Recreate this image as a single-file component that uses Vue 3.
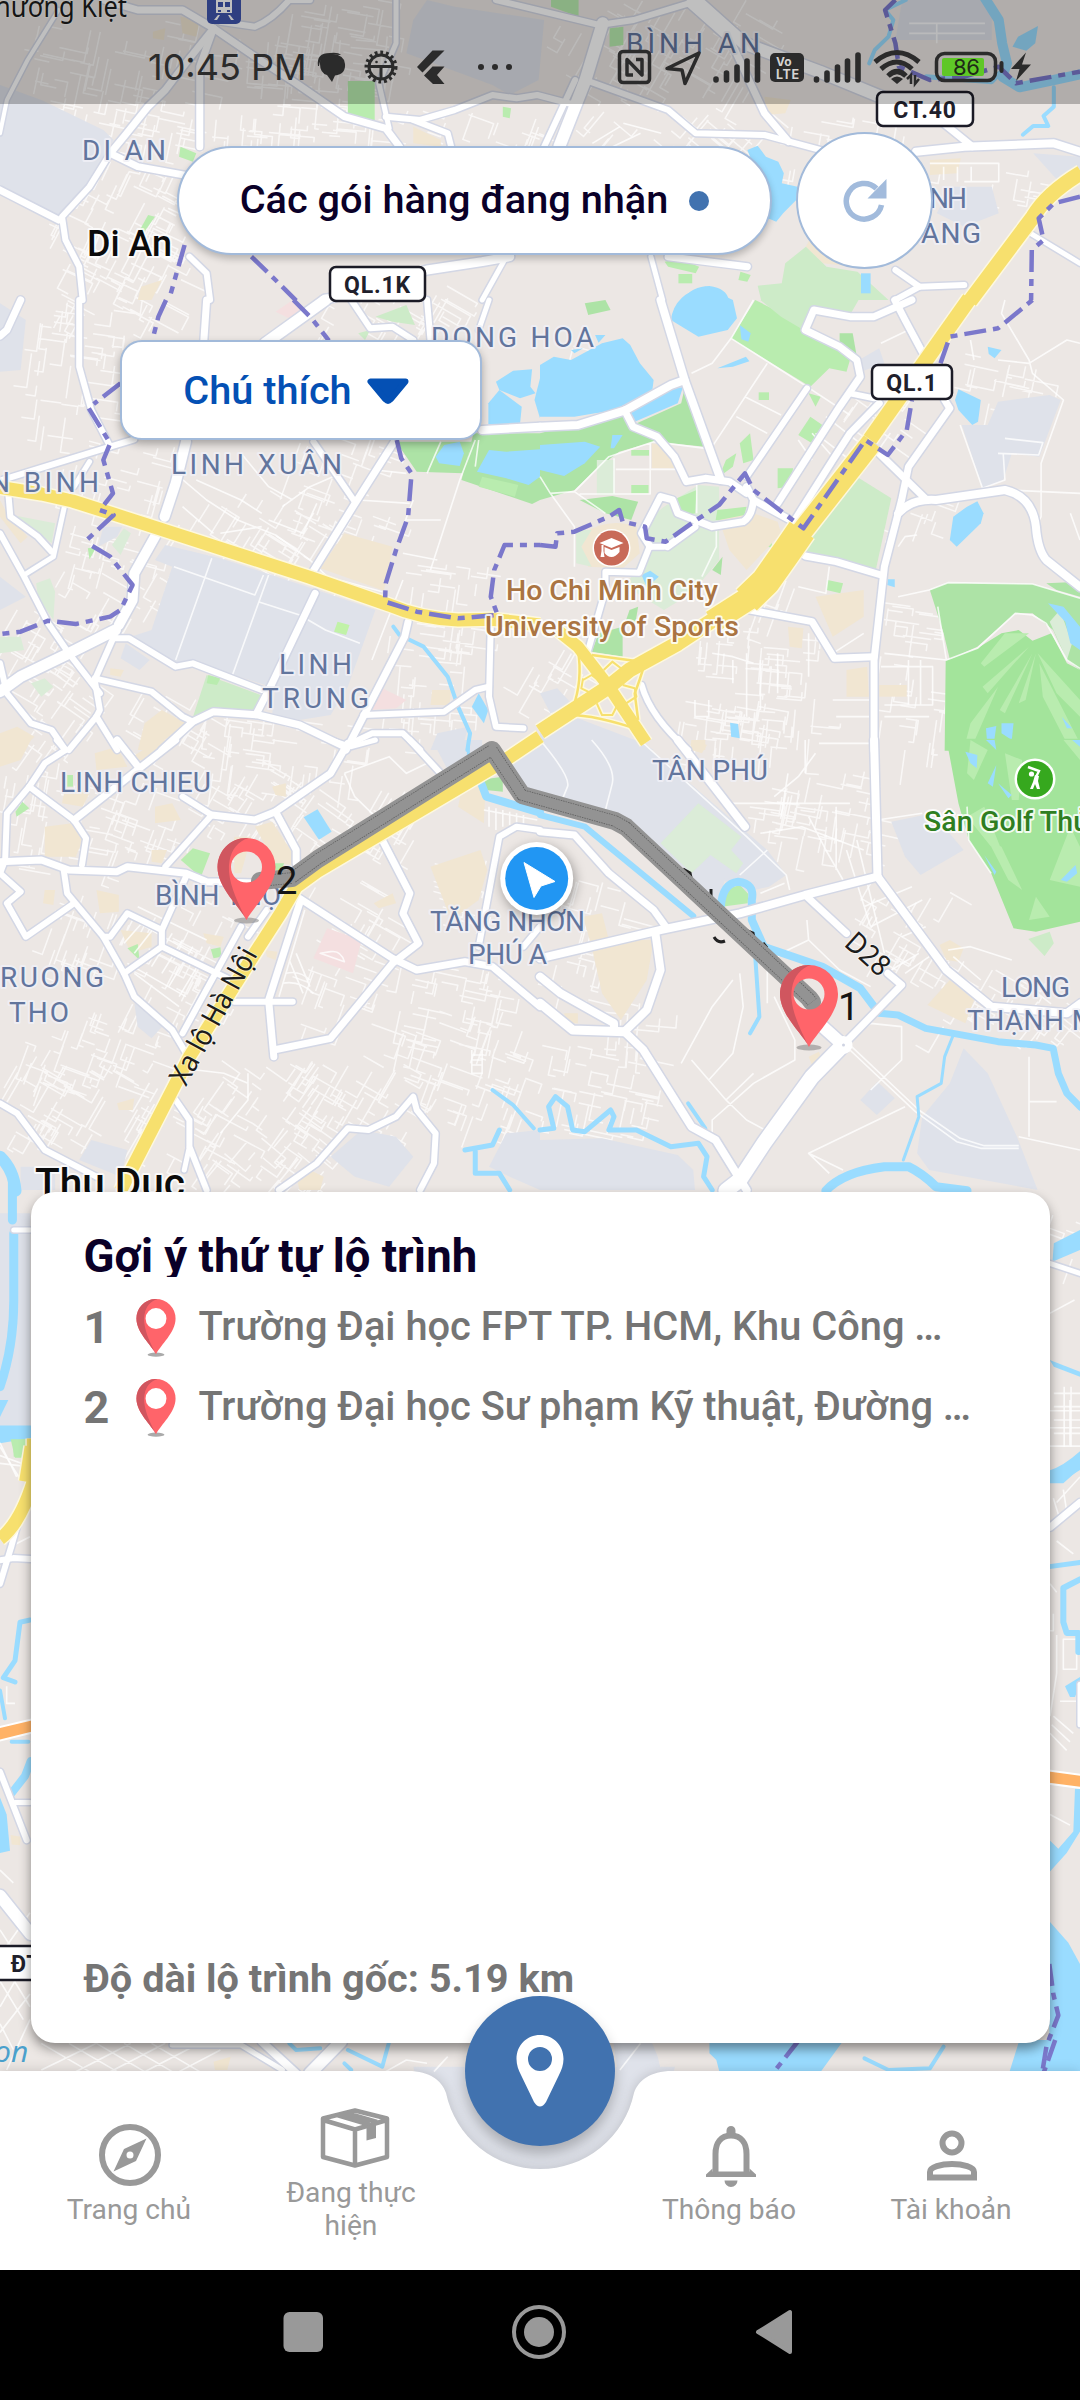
<script setup>
const WATER = '#9adcff'
const INDUS = '#dfe2ea'
const SAND = '#f1e6d2'
const PARK = '#ade3a6'
const LAWN = '#b9ecaf'
const PALE = '#cdebc8'
const MIST = '#dbecd8'
const GOLF = '#a3e49b'
const ROSE = '#f4dfe0'

// Map sheets: each one keeps its own local units and is placed by a transform.
const sheets = [
  {
    at: 'translate(0 0) scale(.68878 .33333)',
    areas: [
      [INDUS, 'M620 0L660 20 790 60 782 240 740 285 715 255 590 160 600 60Z'],
      [INDUS, 'M0 255L60 300 150 390 165 420 130 540 85 660 0 570Z'],
      [INDUS, 'M1310 0H1440V120H1300Z'],
      [INDUS, 'M1380 560H1440L1450 640 1400 680 1360 640Z'],
      [INDUS, 'M1500 460L1568 470V520L1535 540Z'],
      [LAWN, 'M505 243H544V360H505Z'],
      [LAWN, 'M885 85L905 80 905 135 885 140Z'],
      [LAWN, 'M800 0H840V50L800 20Z'],
      [LAWN, 'M262 440L285 460 280 485 260 470Z'],
      [LAWN, 'M215 645L225 650 208 700 203 690Z'],
      [LAWN, 'M730 320L742 325 740 355 730 350Z'],
      [SAND, 'M262 50L290 60 285 110 265 100Z'],
      [SAND, 'M600 380L640 420 640 440 600 430Z'],
      [SAND, 'M1110 290L1148 300 1140 340 1112 345Z'],
      [SAND, 'M222 95L240 85 238 120 222 115Z'],
      [SAND, 'M205 860L235 840 220 900H200Z'],
      [SAND, 'M1180 700L1240 800 1195 790 1170 740Z'],
      [SAND, 'M1350 480L1395 475 1390 520 1350 525Z'],
      [PALE, 'M1100 857L1135 850 1140 790 1170 740 1200 800 1245 815 1290 900H1105Z'],
      [LAWN, 'M965 785L985 775 1015 800 1010 820 970 800Z'],
      [LAWN, 'M985 822H1005V850H985Z'],
      [LAWN, 'M1075 815L1090 825 1085 845 1072 840Z'],
      [WATER, 'M1085 450L1100 437 1112 470 1130 485 1138 520 1135 550 1158 560 1156 600 1137 640 1127 665 1115 655 1110 600 1100 560 1095 500Z'],
      [WATER, 'M990 900Q1005 858 1030 858 1055 865 1058 900Z'],
      [WATER, 'M1250 820H1264V880H1250Z'],
      [WATER, 'M1478 110L1507 78 1503 130 1490 152 1470 140Z'],
    ],
    streams: [
      [10, 'M1430 -5L1450 60 1455 130 1462 190 1455 230 1480 262 1530 240 1570 222'],
      [4, 'M1315 0L1285 30 1297 60 1290 110 1270 150 1262 190'],
      [4, 'M1530 262L1530 320 1515 348 1522 378 1500 378 1485 404'],
      [5, 'M1345 230L1440 245 1460 200'],
    ],
    roads: [
      [7, 'M150 0L200 30 265 30 310 85 275 175 240 270 215 320 180 410 160 460 200 500 280 530'],
      [6, 'M450 0L420 0Q395 60 370 80L320 65'],
      [7, 'M310 85L290 200 290 440'],
      [7, 'M310 85L370 170 430 250 500 350 560 385 580 440'],
      [4, 'M85 30L40 180 10 300 0 400'],
      [6, 'M160 460L130 560 90 650 95 720 115 800 120 900'],
      [7, 'M0 570L85 660'],
      [5, 'M575 0V130L550 250 565 385'],
      [6, 'M720 0L870 75 920 60 1000 10'],
      [12, 'M875 70L850 240 812 440'],
      [6, 'M835 240L790 440'],
      [6, 'M560 350L610 360 660 330 715 285 750 295 780 285 830 312'],
      [6, 'M600 360L650 400 655 440'],
      [7, 'M1000 10L1060 120 1110 340 1145 425'],
      [6, 'M850 240L970 330 1010 400 1110 405 1200 455'],
      [12, 'M1010 0L1080 130 1190 215 1290 300'],
      [8, 'M1330 455L1400 440 1530 430 1568 455'],
      [7, 'M1370 370L1412 440'],
      [9, 'M470 900L620 810 700 785 740 770'],
      [5, 'M735 770L700 900'],
      [5, 'M945 770L962 900'],
      [7, 'M970 770L1085 800'],
      [6, 'M275 770L300 820 305 900'],
      [6, 'M1300 810L1335 860 1400 855'],
      [6, 'M1335 860L1300 900'],
      [5, 'M1480 680L1568 790'],
    ],
    lines: 'M1350 490H1450V545H1400M1370 500V540M1390 500V545M1410 500V545M900 380L860 430M905 370L960 400M870 460L930 400M1000 440L940 560M1320 70H1430M1360 70V130M1320 100H1430',
    yellow: [[15, 'M1570 518Q1520 580 1500 650L1408 904']],
    borders: [
      'M1300 0L1285 30 1300 130 1305 200 1350 240 1400 230 1450 200 1475 250 1568 215',
      'M1568 590L1530 610 1508 655 1515 720 1498 750 1497 900',
      'M365 770L400 840 430 902',
      'M268 735L248 880',
    ],
  },
  {
    at: 'translate(0 300) scale(.34439 .33333)',
    areas: [
      [INDUS, 'M480 735L640 775 920 870 1090 930 1010 1160 960 1245 870 1260 790 1245 800 1165 680 1125 540 1090 500 1095 380 1010 440 990 500 800 450 780Z'],
      [INDUS, 'M0 830L75 890 0 930Z'],
      [INDUS, 'M0 10L75 60 60 210 0 215Z'],
      [INDUS, 'M365 1030L435 1080 405 1110 350 1075Z'],
      [INDUS, 'M300 680L355 680 340 710 285 740Z'],
      [INDUS, 'M1270 1300L1360 1280 1340 1350H1250Z'],
      [PALE, 'M600 1125L770 1190 740 1240 620 1240 560 1252Z'],
      [LAWN, 'M605 1125L640 1135 630 1155 600 1150Z'],
      [PARK, 'M1150 425H1370L1345 520 1210 515Z'],
      [PARK, 'M1375 400H1568V600L1545 612 1340 540Z'],
      [LAWN, 'M1400 530L1505 555 1495 590 1390 560Z'],
      ['#c1f2a8', 'M980 965L1015 975 1005 1005 970 995Z'],
      [MIST, 'M105 850L145 835 160 875 155 960 110 890Z'],
      [MIST, 'M50 648L160 670 150 730Z'],
      [MIST, 'M325 735L360 685 380 700 350 765Z'],
      [LAWN, 'M255 745L280 740 260 778Z'],
      [PALE, 'M1090 50L1180 15 1205 75 1140 65Z'],
      [PALE, 'M1040 100L1075 90 1060 120Z'],
      [MIST, 'M0 1010H60L70 1050 0 1060Z'],
      [MIST, 'M90 1150L130 1135 155 1160 120 1190Z'],
      [SAND, 'M1000 700L1140 740 1115 872 930 805Z'],
      [SAND, 'M420 1270L470 1230 540 1270 440 1350H400Z'],
      [SAND, 'M0 1300L50 1280 100 1310 60 1350H0Z'],
      [SAND, 'M0 600L20 640 80 710 60 730 0 650Z'],
      [SAND, 'M320 1105L360 1110 350 1130 320 1125Z'],
      [SAND, 'M1255 1170L1310 1170 1305 1215 1250 1215Z'],
      [ROSE, 'M1110 1165L1180 1200 1150 1225 1070 1230Z'],
      [ROSE, 'M800 35L850 0 885 30 850 60Z'],
      [WATER, 'M1440 245L1490 212 1545 208 1540 260 1555 280 1510 295 1450 270Z'],
      [WATER, 'M1418 310L1450 270 1515 320 1510 372 1418 372Z'],
      [WATER, 'M1568 235L1552 300 1568 355Z'],
      [WATER, 'M1265 470L1290 435 1335 425 1347 460 1335 498 1275 490Z'],
      [WATER, 'M1420 450L1470 455 1568 448V530L1535 555 1470 535 1385 515Z'],
      [WATER, 'M1390 1180L1418 1230 1405 1270 1370 1220Z'],
    ],
    streams: [[4, 'M1142 980L1160 1005 1230 1040 1300 1130 1330 1220 1365 1300 1357 1350']],
    roads: [
      [7, 'M60 0L20 90 0 108'],
      [6, 'M230 0V200L265 330 320 440'],
      [6, 'M0 542L320 440 390 418'],
      [5, 'M260 485L215 560M187 620L155 770 70 825'],
      [6, 'M25 590L30 650 110 710 150 755'],
      [10, 'M540 425L510 550 478 650M450 710L390 820 385 900 345 975'],
      [6, 'M335 1000L275 1140 290 1230 280 1250 200 1350'],
      [7, 'M600 0L592 120'],
      [11, 'M945 0L770 130'],
      [6, 'M1020 0L1075 85 1140 80 1200 120'],
      [6, 'M1240 0L1250 120'],
      [5, 'M1420 0L1390 90'],
      [8, 'M1400 390L1568 380'],
      [7, 'M1145 425L1025 620 905 820M915 880L790 1150 745 1240'],
      [6, 'M910 425L1030 605'],
      [6, 'M0 700L70 830 140 970 200 1060 290 1180'],
      [11, 'M0 1175L60 1130 200 1060 335 990'],
      [6, 'M330 1015H375L510 1100 560 1090 760 1170'],
      [6, 'M275 1135L440 1175 530 1250 560 1265'],
      [6, 'M0 1090L20 1180 90 1270 150 1290 190 1350'],
      [6, 'M280 1250L340 1350'],
      [7, 'M470 1350L560 1265 620 1235 750 1245 870 1275 1000 1340'],
      [7, 'M1185 965L1175 1010 1070 1220 1005 1350'],
      [6, 'M1055 1245L1290 1235 1380 1170 1420 1160'],
      [6, 'M1425 975L1420 1190 1440 1280 1520 1285'],
      [6, 'M1000 1340L1080 1300 1170 1300 1220 1350'],
    ],
    lines: 'M615 775L510 1080M505 800L740 885 765 825M780 825L675 1125M750 905L870 945 945 990 1045 1030M520 530L600 600 690 660 800 705 900 780 950 830 1110 875M1280 425L1240 520M1380 420L1335 540 1250 810M1170 840L1080 1080M1200 600L1170 680M570 540L700 600 760 640M700 460L780 560 850 600M820 620L900 560 990 520M1090 510L1180 520M1040 600L1190 610M530 620L620 700M640 700L760 680M780 660L880 700 920 610M1180 660L1280 660M1170 760L1270 780M1390 420L1380 500',
    yellow: [[13, 'M0 562L120 582 210 603 360 652 900 832 1130 915Q1220 955 1330 960L1430 958 1568 975']],
    borders: [
      'M482 0L460 50 445 110', 'M852 0L905 55 955 122', 'M350 250L272 312',
      'M258 325L320 430 300 480 328 580 290 630 330 645 250 722',
      'M268 738L320 770 385 855 350 930 320 950 220 972 140 962 60 995 0 1002',
      'M1152 420L1165 475 1195 520 1185 650 1150 750 1120 850 1118 905 1210 935 1330 955 1445 945 1425 890 1435 810 1465 735 1568 735',
    ],
  },
  {
    at: 'translate(540 300) scale(.34439 .33333)',
    areas: [
      [PARK, 'M0 400L240 335 270 375 410 310 420 265 480 440 330 425 230 455 160 510 100 570 0 600Z'],
      [LAWN, 'M625 0L780 80 900 180 890 215 840 205 785 260 555 115Z'],
      [PALE, 'M640 0H925L900 45 790 30 765 90 700 50Z'],
      [PARK, 'M870 100H908L920 170 870 135Z'],
      [PALE, 'M920 530L1020 595 975 810 760 750Z'],
      [MIST, 'M360 620L460 555 520 560 520 780 440 880 360 930 250 860 310 740 290 680Z'],
      [LAWN, 'M385 600L455 570 450 640 410 650Z'],
      [PARK, 'M115 600L210 588 285 605 265 660 190 640Z'],
      [LAWN, 'M515 630L600 620 590 660 510 660Z'],
      [MIST, 'M165 480H217V585H165Z'],
      [SAND, 'M125 700Q200 650 280 680L290 760 240 805 140 800 120 740Z'],
      [MIST, 'M105 690L150 690 120 740 150 800 105 790Z'],
      [PARK, 'M130 10L190 0 205 30 140 45Z'],
      [LAWN, 'M265 555H315V580H265Z'],
      [LAWN, 'M265 450H317V467H265Z'],
      [LAWN, 'M580 430L610 400 620 480 590 490Z'],
      [LAWN, 'M750 405L785 350 820 375 790 430Z'],
      [LAWN, 'M635 277H665V300H635Z'],
      [LAWN, 'M780 280L815 290 800 320Z'],
      [LAWN, 'M690 505H735L725 560 690 565Z'],
      [LAWN, 'M600 705L670 700 675 745 650 735Z'],
      [LAWN, 'M540 480L570 460 560 500 520 530Z'],
      [LAWN, 'M835 840L880 850 872 880 832 870Z'],
      [PARK, 'M500 810L530 770 525 825Z'],
      [PARK, 'M170 1000L240 980 240 1070 150 1055Z'],
      [PARK, 'M260 930L285 920 275 980 250 960Z'],
      [SAND, 'M520 660L620 640 690 665 700 700 600 810 550 750Z'],
      [SAND, 'M800 890L940 870 940 950 850 1010Z'],
      [SAND, 'M890 1110L950 1100 955 1190H890Z'],
      [SAND, 'M985 1155H1065V1190H985Z'],
      [SAND, 'M325 430L385 445 400 505H325Z'],
      [SAND, 'M720 980L765 985 760 1045 725 1040Z'],
      [SAND, 'M440 1320L480 1320 480 1350H435Z'],
      [PARK, 'M1132 870L1185 848 1430 852 1568 895V1110L1530 1080 1490 990 1430 940H1380L1270 1040 1190 1078 1172 1000Z'],
      [PARK, 'M1470 850L1568 845V890L1500 870Z'],
      [GOLF, 'M1178 1082L1270 1045 1340 1000 1390 990 1430 1022 1485 1000 1530 1090 1568 1110V1352H1175Z'],
      ['#ece7e4', 'M1340 990L1385 945 1430 950 1490 995 1440 1015 1390 985Z'],
      [MIST, 'M1480 965L1510 930 1545 1030 1530 1080Z'],
      [LAWN, 'M1350 1000L1420 1000 1290 1100 1280 1090ZM1420 1040L1300 1180 1285 1160ZM1430 1060L1350 1240 1335 1230ZM1440 1060L1410 1200 1390 1210ZM1445 1060L1568 1200V1250L1500 1180ZM1450 1090L1568 1330V1350H1540L1460 1190ZM1330 1160L1250 1350H1230L1250 1270Z'],
      [INDUS, 'M1225 375H1300L1330 305 1480 285 1512 300 1450 470 1370 460 1345 540 1285 565Z'],
      [INDUS, 'M910 190L985 145 1000 190 920 220Z'],
      [INDUS, 'M0 1295L110 1255 300 1330 330 1350H0Z'],
      [INDUS, 'M0 1180L50 1165 100 1220 30 1240Z'],
      [WATER, 'M0 195L40 170 90 180 180 130 240 115 262 135 290 190 330 240 320 320 270 325 160 340 100 350 0 350Z'],
      [WATER, 'M380 60Q390 -20 480 -40L560 0 572 55 545 90 460 110Z'],
      [WATER, 'M265 370L260 330 380 265 415 262 400 310Z'],
      [WATER, 'M0 435L130 425 175 440 130 490 70 528 0 510Z'],
      [WATER, 'M205 445L210 405 240 405 215 445Z'],
      [WATER, 'M580 75L612 100 605 125 585 118Z'],
      [WATER, 'M515 205L598 170 608 184 560 200Z'],
      [WATER, 'M160 105L190 105 170 128ZM90 150L125 145 100 160Z'],
      [WATER, 'M1205 300L1215 268 1280 300 1272 365 1255 375 1215 330Z'],
      [WATER, 'M1200 650L1240 620 1270 604 1288 640 1280 670 1210 740 1190 720Z'],
      [WATER, 'M1300 140L1340 150 1320 175 1303 162Z'],
      [WATER, 'M295 825L320 812 345 830 310 862Z'],
      [WATER, 'M552 1268L575 1272 580 1315 555 1310Z'],
      [WATER, 'M1010 838H1030V862L1008 855Z'],
      [WATER, 'M1475 910L1520 920 1568 980V1050L1540 1030 1525 965Z'],
      [WATER, 'M1295 1285L1325 1278 1315 1350H1300ZM1340 1270H1375L1370 1320 1340 1300ZM1515 1250L1545 1285 1530 1285ZM1545 1320L1568 1320V1345Z'],
    ],
    streams: [],
    roads: [
      [8, 'M350 0L420 240 525 540'],
      [8, 'M0 380L110 375 245 332 380 255 420 240'],
      [7, 'M245 330L270 380 340 410 390 470 425 545 480 535 550 545 600 580'],
      [6, 'M600 530L775 265'],
      [7, 'M690 610L870 320 930 230 920 180 870 140 770 90 795 30 900 50 970 50 1080 0'],
      [7, 'M740 660L850 480 900 400 985 310'],
      [7, 'M1030 0L1060 60 1112 160'],
      [7, 'M1175 300L1190 325 1070 500 1050 600 1000 800 970 1080V1352'],
      [6, 'M900 280L970 295'],
      [7, 'M950 425L1118 595'],
      [8, 'M1040 640Q1080 595 1150 600L1350 570Q1430 590 1440 680 1445 750 1470 780L1570 862'],
      [7, 'M770 768L860 785 990 825'],
      [7, 'M610 930L790 965 855 1075 970 1070'],
      [7, 'M600 560L620 600 735 665'],
      [7, 'M620 600Q615 650 590 665L500 680 400 640 385 600 350 590 295 700 320 740M370 740L450 680'],
      [6, 'M320 740H360M318 740L288 818 190 815V870L140 1050'],
      [6, 'M295 1155Q320 1250 430 1350'],
    ],
    lines: 'M620 0L555 115 500 190 440 220M555 115L775 260 900 345M660 190L500 440M595 290L700 345M570 350L660 400M100 575L200 470 330 425 480 445M30 580L100 680V800M100 575L190 640M115 582H320V430M215 475V582M220 508H400M455 555V640M512 690V740L470 830M0 530L30 580 100 575M990 130L1070 90M1350 0L1340 40 1420 180 1430 220 1520 300 1455 490V650L1430 700M1330 180L1420 190 1530 120 1568 130M1250 120L1260 180M1350 415L1460 428 1448 465 1330 460M1220 375L1285 565 1350 540 1345 460M1360 570L1568 580M1540 640L1568 720M750 860L830 880 840 800M1040 740L1060 710 1095 705M1000 1060L1180 1080 1270 1045 1380 940 1430 945 1470 970 1530 1080 1568 1105M1155 920L1180 1080M1040 890L1130 870 1185 848 1430 852 1568 895M850 1060L940 1000M500 1060L560 1070 620 1090M600 1060V1250M640 1080V1230M690 1060V1180M560 1080V1150M780 1000V1130M850 1200H970M860 1250H960M810 1330H960M1000 1250H1130M990 1100H1140V1215H1000M1070 1080V1215M1105 1080V1215M450 1200V1250H490V1200M790 480L750 420M800 400L900 480M830 350L930 430M850 470L790 400',
    yellow: [
      [15, 'M1247 -4L958 418'],
      [21, 'M965 425L745 715'],
      [29, 'M760 690L720 750 655 845 600 900'],
      [23, 'M630 880L500 965'],
      [15, 'M510 955L400 1030 260 1110 200 1160 0 1295'],
      [12, 'M50 990L110 1040 200 1160 308 1328'],
      [2.5, 'M150 1065L305 1087Q290 1140 275 1180L285 1260M110 1050Q125 1140 95 1225M85 1245Q160 1245 290 1290'],
      [2, 'M185 1110L210 1085 235 1105 220 1135M125 1140L150 1125 175 1145M150 1180L120 1165 125 1135M165 1210L180 1245 210 1245 225 1215M240 1155L275 1165 280 1190 250 1210 230 1190'],
    ],
    borders: [
      'M0 735L45 740 50 700 100 695 200 650 230 630 240 665 305 680 310 715 365 725 440 670 520 615 595 520 620 570 765 685 945 420 1010 465 1065 390 1080 300',
      'M1163 190L1190 110 1330 85 1430 0',
    ],
  },
  {
    at: 'translate(0 740) scale(.34439 .33333)',
    areas: [
      [SAND, 'M0 0H90L60 60 0 80Z'], [SAND, 'M370 60L460 0H520L430 60Z'],
      [SAND, 'M450 200L500 190 525 240 450 250Z'], [SAND, 'M130 260L210 250 240 300 220 350 130 350Z'],
      [SAND, 'M275 40L340 20 370 80 280 90Z'], [SAND, 'M190 140L260 160 240 200 180 190Z'],
      [SAND, 'M740 260L790 245 850 340V375L800 370Z'], [SAND, 'M1250 380L1395 330 1415 390 1390 480 1310 540Z'],
      [SAND, 'M1345 130L1410 140 1405 250 1330 200Z'], [SAND, 'M350 570L440 580V620L380 640Z'],
      [SAND, 'M280 450L345 465 345 515 290 520Z'], [SAND, 'M680 290L730 290 700 400 680 400Z'],
      [SAND, 'M1085 490L1140 460 1150 490 1100 505Z'], [SAND, 'M590 580L650 590 640 620 600 610Z'],
      [SAND, 'M790 140L830 130 830 170 800 165Z'], [SAND, 'M770 630L805 635 800 660 775 650Z'],
      [SAND, 'M130 450L160 450 155 495 125 490Z'], [SAND, 'M440 330L485 330 470 370 440 365Z'],
      [SAND, 'M860 1310L900 1290 940 1310 930 1350H870Z'], [SAND, 'M340 1090L390 1075 385 1110 345 1110Z'],
      [ROSE, 'M950 565L1050 600 1025 700 910 655Z'],
      [LAWN, 'M525 360L560 325 610 340 583 412Z'], [LAWN, 'M370 625L400 612 405 660Z'],
      [LAWN, 'M612 628L640 622 643 650 620 655Z'], [LAWN, 'M45 215L65 185 85 205 48 230Z'],
      [LAWN, 'M195 105H212V140H195Z'], [LAWN, 'M795 370H825L815 395 795 390Z'],
      [INDUS, 'M960 1250L1050 1170 1150 1190 1200 1250 1130 1340 1030 1310Z'],
      [INDUS, 'M1568 1170L1470 1180 1420 1280 1480 1310 1568 1350Z'],
      [INDUS, 'M1270 30L1290 0H1400V50L1300 90Z'], [INDUS, 'M1470 70L1568 20V185L1510 160Z'],
      [PARK, 'M1390 120L1460 110V155L1410 150Z'],
      [INDUS, 'M390 790L480 850 440 895 400 860Z'], [INDUS, 'M230 1260L265 1200 370 1230 350 1310Z'],
      [INDUS, 'M60 1280H160V1350H60Z'],
      [WATER, 'M882 232L922 208 963 275 926 299Z'],
    ],
    streams: [
      [8, 'M1393 118L1412 170 1568 218'], [4, 'M1430 1050L1490 1095 1550 1165'],
      [5, 'M1450 1170L1430 1215 1350 1230M1380 1230V1300H1450L1480 1350'],
      [12, 'M0 1250Q40 1290 45 1352'], [3, 'M1360 0V45'],
    ],
    roads: [
      [6, 'M165 0L190 30 130 70 85 140 20 220 15 360 0 400'], [7, 'M340 0L405 85 215 240'],
      [7, 'M510 0L405 85'], [6, 'M85 140L215 240 250 295 238 375'],
      [7, 'M0 365L120 360 200 390 340 395 370 380 540 400 600 425 770 430'],
      [6, 'M480 380L615 225 530 170'], [7, 'M615 225L740 240 800 215 960 100 1010 10'],
      [7, 'M800 215L860 330V370'], [6, 'M1190 0L1275 95'], [5, 'M960 0L1020 20 1090 0'],
      [6, 'M185 390L195 460 300 590 360 700 390 770 500 870 540 940'],
      [6, 'M0 400L60 455 20 490 75 590 215 490'], [6, 'M300 590H320L370 520 470 570 540 410'],
      [6, 'M470 570V620L360 700'], [6, 'M470 620L660 715'],
      [6, 'M775 510L720 590M700 560L530 880'], [7, 'M870 490L780 780 795 950'],
      [6, 'M680 785H850'], [7, 'M870 475L1140 655 1210 690 1350 665 1430 680 1568 800'],
      [7, 'M1100 280L1190 460 1170 520 1215 610 1140 670 960 895 795 930'],
      [6, 'M1390 620L1450 290 1500 260 1568 270'], [6, 'M510 1080L550 1140V1220L600 1350'],
      [5, 'M550 1220L535 1290'], [6, 'M0 1090L50 1120 130 1230 280 1310'],
      [6, 'M810 1350L920 1270 1010 1165 1070 1170 1150 1130 1200 1070 1210 1110 1265 1180 1260 1270 1220 1350'],
      [6, 'M1568 560L1520 620'],
    ],
    lines: 'M885 510L810 770M1000 100L1130 50 1180 100 1240 70M1000 100L1030 170 1090 230M720 1000V1080L640 1180M570 990L650 1000 720 1030M370 530L560 640M400 500L600 600M420 540L360 610M450 560L390 640M500 580L440 680M530 600L470 700M560 620L490 740M590 650L520 770M390 700L520 800M370 670L540 770M1370 930V1000H1400V930M1370 945H1400M1370 960H1400M1370 975H1400M840 660L880 760M860 640L900 740M830 700Q870 690 900 720M820 730Q870 720 910 760M930 640L1000 665Q990 630 960 635ZM1405 210L1560 240M1420 200V260M1440 205V270M1460 210V260M1480 215V255M1500 220V255M1520 225V260',
    yellow: [[13, 'M1568 -10L1460 65 920 395 860 440 815 520 740 640 550 950 350 1352']],
    borders: [],
  },
  {
    at: 'translate(540 740) scale(.34439 .33333)',
    areas: [
      [INDUS, 'M0 0H290L660 330 715 405 665 440 600 455 490 400 440 400 250 260 0 180Z'],
      [INDUS, 'M430 400L495 350 540 400 520 500 440 460Z'],
      [MIST, 'M460 190L585 290 555 330 590 370 570 400 495 345 440 400 350 310Z'],
      [INDUS, 'M1020 245L1140 220 1230 330 1105 405 1060 350Z'],
      [INDUS, 'M930 1080L980 1025 1030 1075 978 1125Z'],
      [INDUS, 'M1230 925L1300 1000 1385 1190 1445 1350 1130 1290 1095 1240 1110 1130 1190 1030Z'],
      [INDUS, 'M0 1200L180 1195 400 1245 445 1290 450 1350H0Z'],
      [GOLF, 'M1180 -4H1568V545L1440 575 1375 565 1310 400 1245 300 1215 190Z'],
      [LAWN, 'M1250 0L1300 30 1260 120 1240 100ZM1300 300L1340 320 1400 450 1360 420ZM1520 0H1568V60ZM1440 470L1480 530 1420 540ZM1540 260L1568 320V440L1480 420ZM1350 40L1400 60 1390 180 1370 180ZM1240 230L1290 200 1340 330 1310 320Z'],
      [PALE, 'M1418 597L1480 575 1492 610 1465 648Z'],
      [LAWN, 'M528 500L535 450 580 435 605 462 603 490Z'],
      [SAND, 'M125 530L180 520 200 600 330 600 310 720 235 840 180 760 150 620Z'],
      [SAND, 'M1160 615L1190 600 1230 625 1215 665 1180 660Z'],
      [SAND, 'M1125 795L1190 720 1260 780 1235 850Z'],
      [SAND, 'M780 950L810 935 820 965 790 975Z'],
      [SAND, 'M70 820H110V850H75Z'], [SAND, 'M440 0L485 15 470 40 440 30Z'],
      [WATER, 'M1295 0H1320L1325 30ZM1235 35L1270 45 1268 85 1250 70ZM1325 75L1315 140 1300 130ZM1330 130L1370 165 1360 175ZM1290 345L1325 395 1320 405ZM1512 420L1555 375 1560 400 1530 425ZM1545 0H1568V20Z'],
    ],
    streams: [
      [6, 'M0 225L130 260 200 320 445 528'],
      [8, 'M525 500Q530 430 575 425 625 430 615 480L615 540 650 620 820 680 930 745 970 800'],
      [7, 'M985 820L1040 825 1120 865 1200 880 1330 905 1440 915 1490 925 1505 1000 1530 1060 1570 1102'],
      [4, 'M625 650L637 830 610 880'], [3, 'M1200 885L1175 950 1165 1030 1095 1070 1100 1130 1055 1260'],
      [9, 'M830 1352Q880 1295 1000 1280L1070 1280Q1110 1300 1150 1340L1240 1352'],
      [5, 'M0 1170L40 1165 25 1100 45 1070 80 1100 95 1170 130 1175 205 1110 215 1130 200 1170 280 1170 380 1220 460 1210 485 1250 475 1310 500 1350'],
      [4, 'M430 1090L480 1165'],
    ],
    roads: [
      [8, 'M400 0L595 260'], [8, 'M970 0L980 410'],
      [8, 'M0 655L350 570 580 520 770 465 980 410'],
      [8, 'M980 410L1180 690 1310 800 1530 820 1570 790'],
      [7, 'M770 465L890 580'], [7, 'M1010 700L1050 735 880 915'],
      [12, 'M810 850L880 915'], [15, 'M880 915L790 1010 650 1210 580 1320 540 1352'],
      [7, 'M0 275L100 285 200 400 330 510 365 560'], [8, 'M335 580L350 690 310 810 245 875'],
      [8, 'M0 710L60 760 215 850V870'], [9, 'M0 790L95 870 245 875'],
      [8, 'M245 875L300 930 440 1160 510 1200 600 1350'],
    ],
    lines: 'M290 0L600 290 715 405 725 450M150 0Q220 80 210 130L190 210M0 0Q90 110 80 140L60 190M660 330L580 405M900 930L1090 1115 1210 1205 1280 1225H1390M905 920L1100 1110 1220 1195 1290 1217H1390M960 850L1050 860 1050 960 960 1050M1060 1100L780 1240 840 1300M690 1190L600 1140 540 1080 440 960M680 770L740 900V960L620 1030 500 1140V1180M540 1080L620 1000M490 1020L560 940 590 800 580 700M410 970L500 800 560 720M900 900L960 850M640 460L710 430M775 540L780 600 870 690 960 740M780 600L700 640 660 690V790M880 1290L780 1240M980 240L1110 220M1310 400L1245 300 1240 200M1185 630L1250 620 1370 660M1020 690L1100 640M1050 590L1120 560M1060 700L1130 650M1200 650L1280 720M1390 1190L1568 1230M1420 950V1190M1420 1085H1500M770 0V100M560 190H900M680 170L750 110 800 40M860 200V390M920 300L1000 640M890 330L960 560M940 500L1080 440M960 560L1110 480M640 280L760 260 940 330M720 100L700 230M780 230L830 330 880 420',
    yellow: [],
    borders: [],
  },
  {
    at: 'translate(0 1180) scale(.68878 .33333)',
    areas: [
      [INDUS, 'M0 100H44V740H0Z'], [LAWN, 'M18 770L44 780V800L30 830H20Z'],
      [WATER, 'M0 738H44V775L0 790Z'], [WATER, 'M1530 190L1568 150V210L1528 245Z'],
      [WATER, 'M1524 540L1568 575V590L1530 560Z'], [WATER, 'M1524 890L1568 830V870L1545 900H1524Z'],
    ],
    streams: [[9, 'M18 0V120M20 160V360Q20 500 0 620']],
    roads: [[5, 'M20 150H44'], [5, 'M1524 250L1568 280']],
    lines: 'M1530 640H1568M1530 680H1568M1530 720H1568M1530 760H1568M1545 620V800M1555 620V800M0 800L30 900M0 850L40 860M1524 400L1560 360',
    yellow: [[14, 'M46 800L38 905']],
    borders: [],
  },
  {
    at: 'translate(0 1400) scale(.33333 .4273)',
    areas: [
      [INDUS, 'M0 0H90V55H0Z'], [WATER, 'M0 0H25L0 40Z'], [LAWN, 'M32 92H80L65 135H45Z'],
      [WATER, 'M0 930L20 970 30 1055 0 1060Z'], [SAND, 'M32 1018L62 1022 60 1042 35 1040Z'],
    ],
    streams: [[13, 'M0 75H92'], [5, 'M90 515L60 520 45 610 10 650 45 660'], [4, 'M0 680L15 745M35 800H85'], [8, 'M35 920L75 880 92 845']],
    roads: [[6, 'M92 180L35 340 0 430'], [6, 'M0 375L40 370 92 372'], [6, 'M0 870L80 1030'], [5, 'M45 942H90'], [12, 'M0 1160L92 1250']],
    lines: 'M0 100L50 180M0 130L70 150M40 340L90 320M20 670V710H45M0 1100L40 1130M0 1300L90 1200M0 1420L90 1300M0 1480L90 1390M20 1568L90 1450M0 1360L70 1450M20 1330L90 1420M0 1240L50 1300M0 1460L40 1520',
    yellow: [[13, 'M100 90V190Q60 290 0 325']],
    borders: [],
  },
  {
    at: 'translate(1020 1400) scale(.33333 .4273)',
    areas: [
      [WATER, 'M88 165Q130 155 180 120V160L130 195H88Z'],
      [WATER, 'M88 1030L115 1050 160 1010 165 910H180V1010L140 1060 88 1105Z'],
      [WATER, 'M88 1220L145 1270 180 1320V1568H88Z'],
      [WATER, 'M135 670L180 648V665L165 695H150Z'],
    ],
    streams: [[5, 'M88 390L180 380'], [6, 'M180 420L130 440 130 520 140 545 175 545V590']],
    roads: [[7, 'M90 298L180 240'], [5, 'M180 665V760']],
    lines: 'M90 65H180M90 25H180M90 108H180M150 0V108M110 240L180 180M120 280L100 230M140 260L130 210M110 330L160 360M90 430L110 450M110 550V640L90 740M120 705H180M90 780L140 820M130 560V630H170V560ZM90 970L150 995M100 500V540H90M95 760L150 800M100 740L160 780',
    yellow: [],
    borders: ['M88 1320L100 1390 115 1440 80 1510 68 1568'],
  },
  {
    at: 'translate(0 1880) scale(.68878 .33333)',
    areas: [
      [INDUS, 'M890 480H945L955 530 965 620H900ZM600 560H980L920 1000H650Z'],
      [WATER, 'M1030 480H1225L1190 580H1045L1040 540 1030 520Z'],
      [WATER, 'M1480 480H1568V580H1465Z'],
      [SAND, 'M310 545L335 530 330 570H312Z'],
    ],
    streams: [[4, 'M420 490L430 510 465 505M505 510L555 560 565 485M500 550L510 570'], [4, 'M1255 535L1290 570 1350 565 1370 500']],
    roads: [[8, 'M380 485L430 580'], [12, 'M495 485L450 580'], [5, 'M250 495L350 495 410 570']],
    lines: 'M60 490L130 575M100 490L170 575M140 490L210 575M180 490L250 575M220 490L290 575M60 570L140 490M110 575L190 490M160 575L240 490M210 575L290 490M260 575L320 510M560 575L590 540 620 550M630 575L650 530M900 570L930 490',
    yellow: [],
    borders: ['M1160 480L1120 585', 'M1532 480L1515 580'],
  },
]

// Small residential streets: seeded, so the pattern is stable between renders.
const blocks = [
  [30, 20, 170, 130, 12], [60, 160, 130, 120, 25], [210, 40, 180, 120, 5], [240, 0, 160, 80, 10], [400, 110, 150, 60, 20],
  [560, 0, 200, 90, 30], [580, 110, 190, 60, 40], [790, 120, 120, 60, 10], [60, 190, 110, 130, 28], [300, 280, 150, 60, 30],
  [30, 310, 90, 130, 8], [60, 440, 100, 60, 15], [170, 490, 160, 90, 32], [290, 430, 90, 110, 20], [60, 520, 90, 60, 15],
  [0, 600, 70, 90, 30], [10, 650, 80, 100, 35], [110, 690, 100, 60, 30], [200, 715, 160, 70, 8], [390, 560, 90, 100, 8],
  [380, 660, 90, 80, 5], [0, 770, 90, 100, 10], [90, 780, 80, 90, 20], [190, 760, 90, 70, 30], [50, 900, 80, 80, 20],
  [230, 780, 100, 70, 35], [330, 790, 90, 60, 30], [130, 900, 100, 110, 27], [310, 880, 80, 80, 30], [300, 960, 80, 70, 20],
  [430, 860, 60, 60, 15], [400, 960, 120, 90, 12], [20, 1010, 140, 80, 20], [10, 1050, 150, 90, 30], [290, 1050, 120, 90, 30],
  [200, 1060, 120, 110, 35], [400, 1010, 130, 110, 20], [220, 1130, 110, 60, 40], [560, 880, 70, 60, 15], [540, 1040, 110, 100, 12],
  [600, 1000, 60, 60, 5], [700, 620, 130, 130, 5], [680, 700, 110, 60, 10], [880, 600, 70, 150, 8], [860, 880, 100, 90, 30],
  [770, 770, 110, 80, 12], [960, 350, 80, 60, 12], [940, 970, 80, 60, 30], [1020, 970, 60, 60, 38], [880, 500, 60, 40, 20],
  [990, 160, 60, 40, 10], [700, 800, 150, 40, 8], [850, 380, 60, 70, 35], [530, 650, 60, 60, 30], [1030, 1210, 50, 60, 20],
  [740, 580, 60, 40, 20], [560, 340, 50, 30, 15], [160, 1100, 80, 60, 28], [550, 940, 60, 60, 14], [60, 570, 100, 50, 30],
]
function makeStreets() {
  let s = 7
  const r = () => ((s = (s * 16807) % 2147483647) / 2147483647)
  let d = ''
  for (const [x, y, w, h, deg] of blocks) {
    const a = (deg * Math.PI) / 180
    const c = Math.cos(a), n = Math.sin(a)
    const count = Math.round((w * h) / 270)
    for (let i = 0; i < count; i++) {
      const px = x + r() * w, py = y + r() * h
      const flip = r() > 0.5
      const l = 10 + r() * 26, k = 4 + r() * 12
      const [ux, uy] = flip ? [c, n] : [-n, c]
      const bend = r() > 0.5 ? 1 : -1
      d += `M${px.toFixed(1)} ${py.toFixed(1)}l${(ux * l).toFixed(1)} ${(uy * l).toFixed(1)}`
      if (r() > 0.35) d += `l${(-uy * k * bend).toFixed(1)} ${(ux * k * bend).toFixed(1)}`
    }
  }
  return d
}
const streets = makeStreets()

// [text, x, baseline, width]
const districts = [
  ['BÌNH AN', 626, 53, 134], ['DI AN', 82, 160, 84], ['NH', 929, 208, 38], ['ANG', 921, 243, 60],
  ['DONG HOA', 431, 347, 163], ['LINH XUÂN', 171, 474, 171], ['N BINH', -10, 492, 109], ['LINH', 279, 674, 73],
  ['TRUNG', 262, 708, 107], ['LINH CHIEU', 60, 792, 151], ['BÌNH THỌ', 155, 905, 126], ['RUONG', 0, 987, 104],
  ['THO', 9, 1022, 60], ['TĂNG NHƠN', 430, 931, 155], ['PHÚ A', 468, 964, 79], ['TÂN PHÚ', 652, 780, 116],
  ['LONG', 1001, 997, 69], ['THẠNH MỸ', 967, 1030, 146],
]
const shields = [['CT.40', 877, 92, 96], ['QL.1K', 330, 267, 95], ['QL.1', 872, 365, 80], ['ĐT', -5, 1946, 62]]
const pins = [[246.5, 838, '2', 276, 894], [809, 965, '1', 838, 1020]]
const PIN = 'M0 82C-7 68-29 50-29 29A29 29 0 0 1 29 29C29 50 7 68 0 82ZM-15.5 29A15.5 15.5 0 1 0 15.5 29 15.5 15.5 0 1 0-15.5 29Z'
const PIN_SHADE = 'M2 0C-16-1-29 13-29 29C-29 50-7 68 0 82C-8 66-16 50-17.5 34Q-18 28-17 23C-15 11-8 3 2 0Z'
const ROUTE = 'M260 881L292 878 318 859 492 750 522 795 615 821 626 827 809 998 812 1002'

const stops = [
  { n: 1, name: 'Trường Đại học FPT TP. HCM, Khu Công …' },
  { n: 2, name: 'Trường Đại học Sư phạm Kỹ thuật, Đường …' },
]
</script>

<template>
  <div class="phone">
    <svg class="map" width="1080" height="2180" viewBox="0 0 1080 2180">
      <path class="minor faint" :d="streets" />
      <g v-for="(s, i) in sheets" :key="'a' + i" :transform="s.at">
        <path v-for="(a, j) in s.areas" :key="j" :fill="a[0]" :d="a[1]" />
        <path class="minor" :d="s.lines" />
      </g>
      <g v-for="(s, i) in sheets" :key="'w' + i" :transform="s.at">
        <path v-for="(a, j) in s.streams" :key="j" class="line water" :stroke-width="a[0]" :d="a[1]" />
      </g>
      <g v-for="(s, i) in sheets" :key="'c' + i" :transform="s.at">
        <path v-for="(a, j) in s.roads" :key="j" class="line casing" :stroke-width="a[0] + 3" :d="a[1]" />
      </g>
      <g v-for="(s, i) in sheets" :key="'r' + i" :transform="s.at">
        <path v-for="(a, j) in s.roads" :key="j" class="line road" :stroke-width="a[0]" :d="a[1]" />
        <path v-for="(a, j) in s.yellow" :key="'h' + j" class="line halo" :stroke-width="a[0] + 3" :d="a[1]" />
      </g>
      <g v-for="(s, i) in sheets" :key="'y' + i" :transform="s.at">
        <path v-for="(a, j) in s.yellow" :key="j" class="line highway" :stroke-width="a[0]" :d="a[1]" />
      </g>
      <g v-for="(s, i) in sheets" :key="'b' + i" :transform="s.at">
        <path v-for="(d, j) in s.borders" :key="j" class="line border" stroke-width="4.5" :d="d" />
      </g>
      <path class="line" stroke="#fff" stroke-width="15" d="M-5 1735L32 1726M1048 1777L1085 1782" />
      <path class="line" stroke="#ffb266" stroke-width="11" d="M-5 1735L32 1726M1048 1777L1085 1782" />
      <circle cx="843.500" cy="1045" r="9" fill="#fff" /><circle cx="843.500" cy="1045" r="1.500" fill="#cfd3e2" />

      <g>
        <text v-for="(t, i) in districts" :key="i" class="district" :x="t[1]" :y="t[2]" :textLength="t[3]">{{ t[0] }}</text>
      </g>
      <g class="street">
        <text x="-5" y="17" textLength="132" lengthAdjust="spacingAndGlyphs">hương Kiệt</text>
        <text x="0" y="0" textLength="151" lengthAdjust="spacingAndGlyphs" transform="translate(186 1087) rotate(-61.500)">Xa lộ Hà Nội</text>
        <text x="0" y="0" textLength="49" lengthAdjust="spacingAndGlyphs" transform="translate(843 945) rotate(42)">D28</text>
        <path d="M683 869l7 4 2 9M711 889v14M714 937q4 7 11 4M745 930l8 3 2 9M763 943l4 5" fill="none" stroke="#222" stroke-width="3" />
      </g>
      <text class="town" x="87" y="256" textLength="85" lengthAdjust="spacingAndGlyphs">Di An</text>
      <text class="town big" x="35" y="1197" textLength="150" lengthAdjust="spacingAndGlyphs">Thu Duc</text>
      <text class="place" x="506" y="600" textLength="212">Ho Chi Minh City</text>
      <text class="place" x="485" y="636" textLength="254">University of Sports</text>
      <text class="golf" x="924" y="831" textLength="165">Sân Golf Thủ</text>
      <text class="river" x="-6" y="2062">on</text>

      <g v-for="(b, i) in shields" :key="'s' + i">
        <rect :x="b[1]" :y="b[2]" :width="b[3]" height="34" rx="6" fill="#fff" stroke="#1b1b26" stroke-width="2.500" />
        <text class="shield" :x="b[1] + b[3] / 2" :y="b[2] + 25.500" text-anchor="middle">{{ b[0] }}</text>
      </g>

      <g transform="translate(611.500 548)">
        <circle r="19" fill="#fff" /><circle r="17.500" fill="#c86a58" />
        <path fill="#fff" d="M-12-5L0-10 12-5 0 0ZM-7-1L0 2 8-1V4Q4 9 0 9T-7 5ZM-10-3H-8V3L-7 9H-11L-10 3Z" />
      </g>
      <g transform="translate(1035 779)">
        <circle r="20.500" fill="#fff" /><circle r="18" fill="#36a81e" />
        <circle cx="-3.500" cy="-5" r="2.600" fill="#fff" />
        <path fill="none" stroke="#fff" stroke-width="2.400" d="M-7-12L4-8 1.500-3" />
        <path fill="#fff" d="M0-4L4-3 3 2 5 10H2L0 5-2 10H-5L-2 3Z" />
      </g>
      <g>
        <rect x="207" y="-10" width="34" height="34" rx="5" fill="#3f54ad" />
        <path fill="#fff" d="M216 0H232V13H216ZM218 15L214 20H217L220 15ZM230 15L234 20H231L228 15Z" />
        <path fill="#3f54ad" d="M218 2H223V7H218ZM225 2H230V7H225ZM218 10H221V12H218ZM227 10H230V12H227Z" />
      </g>

      <path class="line" stroke="#939393" stroke-width="18" :d="ROUTE" />
      <path fill="none" stroke="#5f5f5f" stroke-width="11.500" stroke-dasharray="1.500 1" :d="ROUTE" />
      <path fill="none" stroke="#939393" stroke-width="10" :d="ROUTE" />

      <g v-for="(p, i) in pins" :key="'p' + i">
        <g :transform="`translate(${p[0]} ${p[1]})`">
          <ellipse cy="82.500" rx="12.500" ry="3" fill="#777" opacity=".5" />
          <path fill="#ff646a" fill-rule="evenodd" :d="PIN" />
          <path fill="#d0565f" :d="PIN_SHADE" />
        </g>
        <text class="stop" :x="p[3]" :y="p[4]">{{ p[2] }}</text>
      </g>

      <g class="me">
        <circle cx="536.700" cy="878.500" r="36.500" fill="#fff" />
        <circle cx="536.700" cy="878.500" r="31.500" fill="#2196f3" />
        <path fill="#fff" stroke="#fff" stroke-width="1" stroke-linejoin="round" d="M524 862.500L555 881.500 541 886 534 897.500Z" />
      </g>
    </svg>

    <header class="status">
      <span class="clock">10:45 PM</span>
      <svg class="left-icons" width="200" height="44" viewBox="316 44 200 44">
        <g fill="#2b2b2b">
          <path d="M320 64Q319 55 332 54.500Q344 54 345 64Q346 74 335 75.500L332 82 327 75Q320 73 320 64Z" />
          <path d="M318 66Q316 53 330 53Q338 52 341 55Q320 53 319 66Z" />
          <path d="M417 67L432.500 50.500H444.500L422.500 72.500ZM432.500 66.500H444.500L437 75 444.500 84H433L424 75.500Z" />
          <circle cx="481" cy="67" r="3" /><circle cx="495" cy="67" r="3" /><circle cx="509" cy="67" r="3" />
        </g>
        <circle cx="381" cy="67" r="14.500" fill="none" stroke="#2b2b2b" stroke-width="4" stroke-dasharray="2.800 2.800" />
        <circle cx="381" cy="67" r="12" fill="none" stroke="#2b2b2b" stroke-width="3" />
        <path d="M369 66.500H393M381 67V79" stroke="#2b2b2b" stroke-width="3" />
        <circle cx="376.500" cy="62" r="1.300" fill="#2b2b2b" /><circle cx="385.500" cy="62" r="1.300" fill="#2b2b2b" />
      </svg>
      <svg class="right-icons" width="420" height="44" viewBox="614 44 420 44">
        <rect x="619.500" y="51.500" width="30" height="31" rx="3.500" fill="none" stroke="#2b2b2b" stroke-width="3.500" />
        <path d="M633 75H627V59.500L642 75V59.500H636" fill="none" stroke="#2b2b2b" stroke-width="3.500" stroke-linejoin="round" />
        <path d="M667 68.500L699 53 685 83.500 682 70Z" fill="none" stroke="#2b2b2b" stroke-width="3.500" stroke-linejoin="round" />
        <g stroke="#2b2b2b" stroke-width="5.600" stroke-linecap="round">
          <path d="M716 80V79M726.500 80V73M737 80V67M747 80V61M757.500 80V55M816.500 80V79M827 80V73M837.500 80V67M847.500 80V61M858 80V55" />
        </g>
        <rect x="770" y="53" width="34" height="29" rx="5" fill="#2b2b2b" />
        <text x="776" y="66" font-family="Inter, sans-serif" font-size="12" font-weight="700" fill="#d5d3d1">Vo</text>
        <text x="776" y="79" font-family="Inter, sans-serif" font-size="12.500" font-weight="700" fill="#d5d3d1" textLength="23">LTE</text>
        <g fill="none" stroke="#2b2b2b" stroke-width="5">
          <path d="M875 62Q897 43 919 62M881 69Q897 55 912 69M888 76Q897 67 906 76" />
        </g>
        <path d="M891 79Q897 74 903 79L897 84Z" fill="#2b2b2b" />
        <path d="M911 84V75L907 79M915 75V84L919 79" fill="none" stroke="#2b2b2b" stroke-width="2.500" />
        <rect x="936.500" y="53.500" width="59" height="27" rx="8" fill="none" stroke="#2b2b2b" stroke-width="3.500" />
        <rect x="942" y="58" width="42" height="18" rx="2" fill="#5fc727" />
        <text x="953" y="75" font-family="Inter, sans-serif" font-size="22" fill="#1e2a18" textLength="27">86</text>
        <path d="M1001.500 63V71" stroke="#2b2b2b" stroke-width="4" stroke-linecap="round" />
        <path d="M1026 52.500L1011 69H1019.500L1016 81 1031 64.500H1022Z" fill="#2b2b2b" />
      </svg>
    </header>

    <div class="actions">
      <button class="pill"><span>Các gói hàng đang nhận</span><i class="dot"></i></button>
      <button class="refresh">
        <svg width="44" height="44" viewBox="0 0 44 44">
          <path d="M38.500 26A17.800 17.800 0 1 1 33.500 9.500" fill="none" stroke="#a2bbdc" stroke-width="5.500" />
          <path d="M43.500 0V19.500H24.500Z" fill="#a2bbdc" />
        </svg>
      </button>
    </div>

    <button class="legend">
      <span>Chú thích</span>
      <svg width="42" height="27" viewBox="0 0 42 27">
        <path d="M3.500 3.500H38.500L23.500 21.500Q21 24 18.500 21.500Z" fill="#0450b4" stroke="#0450b4" stroke-width="6" stroke-linejoin="round" />
      </svg>
    </button>

    <section class="sheet">
      <h2>Gợi ý thứ tự lộ trình</h2>
      <ul>
        <li v-for="s in stops" :key="s.n">
          <b>{{ s.n }}</b>
          <svg width="40" height="58" viewBox="-29.500 0 59 86">
            <ellipse cy="82.500" rx="12.500" ry="3" fill="#aaa" />
            <path fill="#ff646a" fill-rule="evenodd" :d="PIN" />
            <path fill="#d0565f" :d="PIN_SHADE" />
          </svg>
          <span>{{ s.name }}</span>
        </li>
      </ul>
      <p>Độ dài lộ trình gốc: 5.19 km</p>
    </section>

    <nav class="tabs">
      <svg class="tabs-shape" width="1080" height="200" viewBox="0 0 1080 200">
        <path fill="#fff" d="M0 0H408C430 0 442 10 446 22A96.100 96.100 0 0 0 634 22C638 10 650 0 672 0H1080V200H0Z" />
      </svg>
      <div class="fab">
        <svg width="50" height="74" viewBox="0 0 50 74">
          <path fill="#fff" fill-rule="evenodd" d="M25 1C12 1 1.500 11 1.500 25C1.500 31 3.500 36 6 41L19 68Q25 77 31 68L44 41C46.500 36 48.500 31 48.500 25C48.500 11 38 1 25 1ZM25 13A12 12 0 1 1 25 37 12 12 0 1 1 25 13Z" />
        </svg>
      </div>
      <a class="tab t1">
        <svg width="62" height="62" viewBox="0 0 62 62">
          <circle cx="31" cy="31" r="28" fill="none" stroke="#999" stroke-width="6" />
          <path fill="#999" fill-rule="evenodd" d="M47.500 14.500L37 37 14.500 47.500 25 25ZM31 27.500A3.500 3.500 0 1 0 31 34.500 3.500 3.500 0 1 0 31 27.500Z" />
        </svg>
        <span>Trang chủ</span>
      </a>
      <a class="tab t2">
        <svg width="70" height="60" viewBox="0 0 70 60">
          <path d="M35 2.500L67 10.500V49L35 57.500 3 49V10.500ZM3 12L35 21.500 67 12M35 21.500V57M17 7L49 16.500M26 5L57 14" fill="none" stroke="#999" stroke-width="4.500" stroke-linejoin="round" />
          <path d="M46.500 18L56 15V30L46.500 32.500Z" fill="#999" />
        </svg>
        <span>Đang thực<br />hiện</span>
      </a>
      <a class="tab t3">
        <svg width="50" height="61" viewBox="0 0 50 61">
          <path d="M9.500 46V28C9.500 17 15 9.500 25 9.500S40.500 17 40.500 28V46" fill="none" stroke="#999" stroke-width="6" />
          <path d="M0 48.500L6.500 42.500V45.500H43.500V42.500L50 48.500V51H0ZM20.500 9V4.500A4.500 4.500 0 0 1 29.500 4.500V9ZM18.500 54.500H31.500A6.500 6.500 0 0 1 18.500 54.500Z" fill="#999" />
        </svg>
        <span>Thông báo</span>
      </a>
      <a class="tab t4">
        <svg width="50" height="51" viewBox="0 0 50 51">
          <circle cx="25" cy="13" r="9.500" fill="none" stroke="#999" stroke-width="6" />
          <path d="M3 47.500V42C3 37 14 34 25 34S47 37 47 42V47.500Z" fill="none" stroke="#999" stroke-width="6" />
        </svg>
        <span>Tài khoản</span>
      </a>
    </nav>

    <footer class="system">
      <svg width="1080" height="130" viewBox="0 0 1080 130">
        <rect x="283.500" y="42" width="39.500" height="40" rx="6" fill="#999" />
        <circle cx="539" cy="62" r="25" fill="none" stroke="#999" stroke-width="4" />
        <circle cx="539" cy="62" r="15" fill="#999" />
        <path d="M758 62L790 42V82Z" fill="#999" stroke="#999" stroke-width="4" stroke-linejoin="round" />
      </svg>
    </footer>
  </div>
</template>

<style scoped>
.phone {
  position: relative;
  width: 1080px;
  height: 2400px;
  overflow: hidden;
  display: flex;
  flex-direction: column;
  background: #ece7e4;
  font-family: Roboto, "Noto Sans", sans-serif;
}
.map { position: absolute; left: 0; top: 0; }
.map path { vector-effect: non-scaling-stroke; }
.minor { fill: none; stroke: #fff; stroke-width: 1.6; opacity: .8; stroke-linejoin: round; }
.faint { opacity: .7; stroke-width: 1.5; }
.line { fill: none; stroke-linejoin: round; stroke-linecap: round; }
.water { stroke: #9adcff; }
.casing { stroke: #d3d7e5; }
.road { stroke: #fff; }
.halo { stroke: #fdf8df; stroke-linecap: butt; }
.highway { stroke: #f7e06e; stroke-linecap: butt; }
.border { stroke: #7b78cb; stroke-linecap: butt; stroke-dasharray: 22 7 7 7; }
.map text { paint-order: stroke; stroke-linejoin: round; }
.district { font-size: 28px; fill: #62759d; stroke: rgba(240, 240, 246, .85); stroke-width: 4px; }
.street text { font-family: "Noto Sans", sans-serif; font-size: 29px; fill: #1c1c1c; stroke: rgba(255, 255, 255, .5); stroke-width: 2px; }
.town { font-size: 36px; font-weight: 500; fill: #0b0b0b; stroke: rgba(255, 255, 255, .8); stroke-width: 4px; }
.big { font-size: 41px; }
.place { font-size: 28.5px; font-weight: 500; fill: #aa7442; stroke: rgba(255, 255, 255, .85); stroke-width: 4px; }
.golf { font-size: 28.5px; font-weight: 500; fill: #2f7e21; stroke: rgba(255, 255, 255, .85); stroke-width: 4px; }
.river { font-family: "Open Sans", sans-serif; font-style: italic; font-size: 30px; fill: #4aa0cc; }
.shield { font-size: 23px; font-weight: 700; fill: #20202b; letter-spacing: .8px; }
.stop { font-size: 38px; fill: #151515; }
.me { filter: drop-shadow(2px 4px 6px rgba(0, 0, 0, .35)); }

.status {
  position: relative;
  flex: none;
  height: 104px;
  background: rgba(0, 0, 0, .25);
  display: flex;
  align-items: flex-start;
}
.clock { margin: 45px 0 0 148px; width: 168px; font: 400 36px/44px Inter, sans-serif; letter-spacing: 0; color: #2b2b2b; white-space: nowrap; }
.left-icons { margin-top: 44px; }
.right-icons { margin: 44px 0 0 98px; }

button { padding: 0; box-sizing: border-box; background: #fff; border: 2.5px solid #a2bada; font-family: inherit; }
.actions { position: relative; flex: none; display: flex; align-items: center; margin: 28px 0 0 177px; height: 137px; gap: 24px; }
.pill {
  width: 595px; height: 109px; border-radius: 55px;
  display: flex; align-items: center; justify-content: center; gap: 21px;
  font-size: 39.7px; font-weight: 500; color: #0a0028; white-space: nowrap;
  box-shadow: 0 4px 7px rgba(0, 0, 0, .22);
}
.pill span { position: relative; top: -1px; }
.dot { width: 20px; height: 20px; border-radius: 50%; background: #4172af; }
.refresh { width: 137px; height: 137px; border-radius: 50%; display: flex; align-items: center; justify-content: center; }
.legend {
  position: relative; flex: none; margin: 71px 0 0 120px; width: 362px; height: 100px; border-radius: 22px;
  display: flex; align-items: center; justify-content: center; gap: 15px; padding: 0 14px 0 4px;
  font-size: 39.7px; font-weight: 500; color: #0450b4;
  box-shadow: 0 4px 8px rgba(0, 0, 0, .3);
}
.legend svg { margin-top: 3px; }

.sheet {
  position: relative; flex: none; box-sizing: border-box; margin: 752px 30.5px 0; height: 851px; padding: 38px 53px 0;
  border-radius: 24px; background: #fff; display: flex; flex-direction: column;
  box-shadow: 0 6px 12px rgba(0, 0, 0, .42);
}
.sheet h2 { margin: 0; height: 47px; overflow: hidden; font-size: 45.5px; line-height: 53px; font-weight: 700; color: #0a0028; white-space: nowrap; }
.sheet ul { list-style: none; margin: 11px 0 0; padding: 0; }
.sheet li { height: 80px; display: flex; align-items: center; color: #757575; white-space: nowrap; }
.sheet li b { width: 52px; font-size: 45px; font-weight: 700; position: relative; top: -1px; }
.sheet li span { margin-left: 23px; font-size: 39.8px; font-weight: 500; position: relative; top: -2px; }
.sheet p { margin: auto 0 39px; font-size: 39.7px; line-height: 50px; font-weight: 700; color: #757575; }

.tabs { position: relative; flex: none; margin-top: 28px; height: 199px; display: flex; }
.tabs-shape { position: absolute; left: 0; top: 0; filter: drop-shadow(0 0 6px rgba(0, 0, 0, .16)); }
.fab {
  position: absolute; left: 465px; top: -75px; width: 150px; height: 150px; border-radius: 50%; background: #4172af;
  display: flex; align-items: center; justify-content: center; box-shadow: 0 8px 14px rgba(0, 0, 0, .24);
}
.tab { position: relative; display: flex; flex-direction: column; align-items: center; color: #999; font-size: 28.2px; line-height: 33px; text-align: center; white-space: nowrap; width: 200px; }
.tab svg { flex: none; }
.t1 { margin-left: 29px; padding-top: 53px; }
.t1 svg { margin-left: 2px; }
.t1 span { margin-top: 7px; }
.t2 { margin-left: 22px; padding-top: 37px; }
.t2 svg { margin-left: 7px; }
.t2 span { margin-top: 8px; }
.t3 { margin-left: 178px; padding-top: 55px; }
.t3 svg { margin-left: 3px; }
.t3 span { margin-top: 6px; }
.t4 { margin-left: 22px; padding-top: 59px; }
.t4 svg { margin-left: 2px; }
.t4 span { margin-top: 12px; }

.system { position: relative; flex: none; height: 130px; background: #000; }
.system svg { display: block; }
</style>
